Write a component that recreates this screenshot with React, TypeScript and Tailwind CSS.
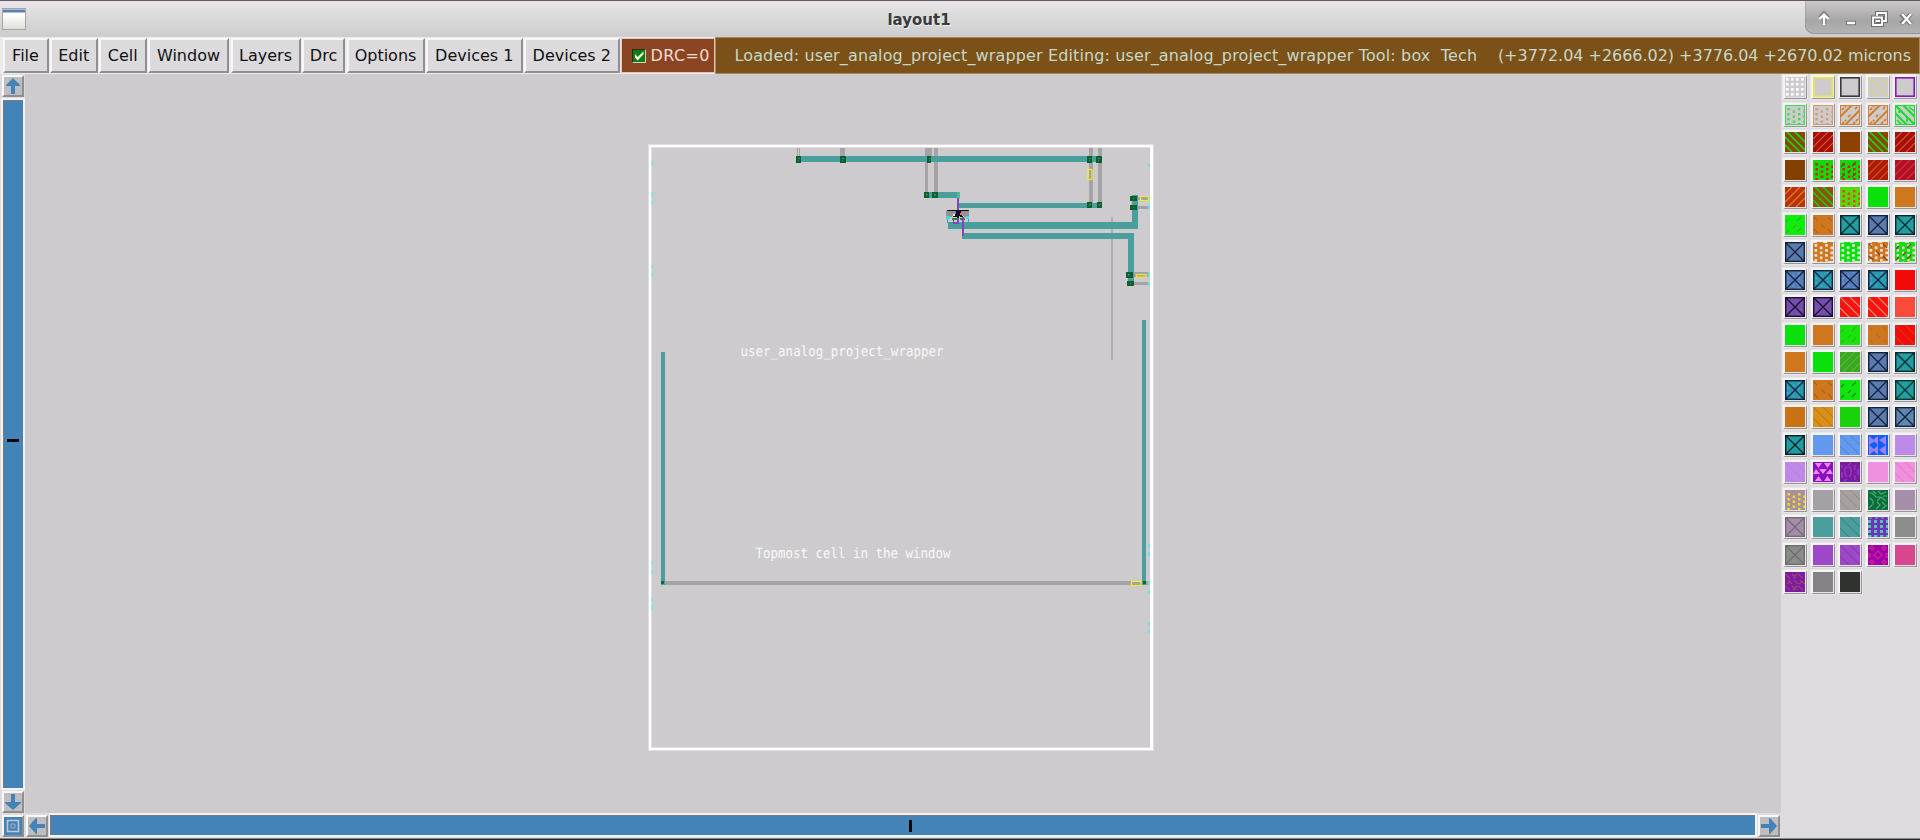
import React from 'react';

type Swatch = [base: string, pattern?: string, ink?: string, extra?: string];

const ORANGE = '#cf771f';
const GREEN = '#0ae00a';
const BLUE = '#5d7aae';
const TEAL = '#209ea2';
const BARE = '#cdcbce';
const NAVY = '#10233d';

const swatches: Swatch[] = [
  [BARE, 'grid', '#ffffff'], [BARE, 'frame', '#ece840'], [BARE, 'frame', '#3a3a3a'], [BARE, 'back', '#dcd86c'], [BARE, 'frame', '#8718b4'],
  [BARE, 'dotframe', '#3ddc4a'], [BARE, 'dotframe', '#d89a66'], [BARE, 'slashframe', '#d08030'], [BARE, 'slashframe', '#d08030'], [BARE, 'backframe', '#14e028'],
  ['#8c4508', 'bback', '#14d80c'], ['#a80c0c', 'slash', '#c8641a'], ['#8b4200'], ['#8c4508', 'bback', '#14d80c'], ['#a80c0c', 'slash', '#c8641a'],
  ['#834000'], ['#0cdc0c', 'stagger', '#f01010'], ['#0cdc0c', 'stagger', '#f01010', 'dash'], ['#ad1a0a', 'slash', '#cc5a1a'], ['#b50c28', 'slash', '#c83c34'],
  ['#bb300c', 'slash', '#e08c10'], ['#94500c', 'bback', '#1cc80c'], ['#50dc0c', 'stagger', '#f04018'], [GREEN], [ORANGE],
  ['#0cee0c', 'dash', '#40a828'], [ORANGE, 'bdash', '#b0642c'], [TEAL, 'x', '#08282a'], [BLUE, 'x', NAVY], [TEAL, 'x', '#08282a'],
  [BLUE, 'x', NAVY], [ORANGE, 'brick', '#eee0d4'], [GREEN, 'brick', '#dcf2dc'], [ORANGE, 'brick', '#eee0d4', 'bdash'], [GREEN, 'brick', '#eec8c8', 'dash'],
  [BLUE, 'dotx', NAVY], [TEAL, 'dotx', NAVY], [BLUE, 'dotx', NAVY], [TEAL, 'dotx', NAVY], ['#f20a0a'],
  ['#7350a8', 'x', '#200c38'], ['#7350a8', 'x', '#200c38'], ['#fc140c', 'back', '#c89898'], ['#fc140c', 'back', '#c89898'], ['#fa4a3a'],
  [GREEN], [ORANGE], ['#18e40c', 'dash', '#34b41c'], [ORANGE, 'bdash', '#b0702c'], ['#f40c0c', 'back', '#c84010'],
  [ORANGE], [GREEN], ['#3ba824', 'slash', '#54b830'], [BLUE, 'x', NAVY], [TEAL, 'x', '#08282a'],
  [TEAL, 'dotx', NAVY], [ORANGE, 'bdash', '#ac5c20'], ['#0ce80c', 'dash', '#307410'], [BLUE, 'x', NAVY], [TEAL, 'x', '#08382a'],
  ['#c87214'], ['#d8901a', 'back', '#c07818'], ['#18d20c'], [BLUE, 'x', NAVY], ['#5f87ae', 'x', NAVY],
  ['#209ca4', 'x', '#082020'], ['#6299ee'], ['#6299ee', 'back', '#5a88d0'], ['#0a60f8', 'bows', '#a080ee'], ['#bd8aea'],
  ['#bd8aea', 'back', '#c87cdc'], ['#8a10c4', 'tris', '#f084f0'], ['#742098', 'rings', '#a828d8'], ['#f090e0'], ['#f090e0', 'back', '#f07cb8'],
  ['#a8909c', 'stagger', '#f0dc20'], ['#a3a1a3'], ['#a3a1a3', 'back', '#ac8c78'], ['#106a34', 'maze', '#38b088'], ['#a58ea8'],
  ['#a58ea8', 'x', '#776878'], ['#4a9f9e'], ['#4a9f9e', 'back', '#408880'], ['#7030c0', 'dots', '#50c8a0'], ['#8b8d8b'],
  ['#8b8d8b', 'x', '#6c6e6c'], ['#9c48c8'], ['#9c48c8', 'back', '#8c3cb0'], ['#9a00b0', 'gems', '#d82080'], ['#d8468e'],
  ['#8218a4', 'weave', '#8c5068'], ['#858387'], ['#30322f'],
];

const lines: Record<string, string> = {
  back: 'M0 0L20 20M10 0L20 10M0 11L9 20',
  bback: 'M-1 4L15 20M1 -1L21 19M9 -1L21 11M-1 12L7 20',
  slash: 'M0 7L7 0M0 15L15 0M3 20L20 3M11 20L20 11',
  dash: 'M1 7L4 4M12 6L16 2M8 13L11 10M1 18L4 15M12 17L16 13',
  bdash: 'M1 2L4 5M15 2L19 6M8 9L12 13M1 14L5 18M15 14L19 18',
};

function cells(step: number, stagger: number, x0: number, y0: number, size: number, ink: string) {
  const out: React.ReactNode[] = [];
  for (let c = 0; x0 + c * step < 20; c++) {
    for (let y = y0 + (c % 2 ? stagger : 0); y < 20; y += 5) {
      out.push(<rect key={`${c}-${y}`} x={x0 + c * step} y={y} width={size} height={size} fill={ink} />);
    }
  }
  return out;
}

function Texture({ kind, ink }: { kind?: string; ink?: string }) {
  const color = ink ?? '#000';
  const stroke = { fill: 'none', stroke: color };
  switch (kind) {
    case 'frame': return <rect x=".8" y=".8" width="18.400" height="18.400" strokeWidth="1.600" {...stroke} />;
    case 'grid': return <g>{cells(5, 0, 1, 1, 2.6, color)}</g>;
    case 'dots': return <g>{cells(6, 0, 0, 3, 3, color)}<path d="M1 1H20M1 19H20" strokeDasharray="3 3" {...stroke} /></g>;
    case 'stagger': return <g>{cells(5.3, 2.5, 2.4, 3, 2.5, color)}</g>;
    case 'dotframe': return <g>{cells(5.3, 2.5, 2.4, 3, 2.3, color)}<rect x=".5" y=".5" width="19" height="19" {...stroke} /></g>;
    case 'slashframe': return <g><rect x=".5" y=".5" width="19" height="19" {...stroke} /><path d="M0 12L12 0M5 20L20 5" strokeWidth="2" {...stroke} /><path d="M2 5L6 1M2 19L6 15M8 12L11 9M13 19L19 13M15 4L18 1" strokeWidth="1.800" strokeDasharray="3 1" {...stroke} /></g>;
    case 'backframe': return <g><rect x=".5" y=".5" width="19" height="19" {...stroke} /><path d="M0 0L20 20M8 0L20 12M0 8L12 20" strokeWidth="2.2" {...stroke} /><path d="M14 2L19 6M2 15L6 19M3 7H7M12 12V17" strokeWidth="1.5" {...stroke} /></g>;
    case 'x': return <g><rect x=".7" y=".7" width="18.6" height="18.6" strokeWidth="1.4" {...stroke} /><path d="M1 1L19 19M19 1L1 19" strokeWidth="1.3" {...stroke} /></g>;
    case 'dotx': return <g>{cells(5.3, 2.5, 2, 2, 2.5, '#5590e8')}<rect x=".7" y=".7" width="18.6" height="18.6" strokeWidth="1.4" {...stroke} /><path d="M1 1L19 19M19 1L1 19" strokeWidth="1.3" {...stroke} /></g>;
    case 'brick': return <g>{cells(5.3, 2.5, 1.5, 2, 2.7, color)}<path d="M0 .5H4M10 .5H14M0 19.5H4M15 19.5H20" {...stroke} /></g>;
    case 'bows': return <path d="M1 1L7 6L1 10ZM1 10L7 15L1 20ZM10 1V20L5 15L10 10L5 5ZM11 5L18 1V10ZM11 15L18 10V20Z" fill={color} />;
    case 'tris': return <path d="M2 1H9L5.500 6ZM11 1H18L14.500 6ZM0 12L3 7L7 12ZM6 7H14L10 12ZM13 12L17 7L20 12ZM2 19L5.500 14L9 19ZM11 19L14.500 14L18 19Z" fill={color} />;
    case 'rings': return <path d="M2 3V6M2 10V16M7 4L5 7V12L7 15M9 4L11 7V12L9 15M15 3V8M18 7V13M15 13V18M4 19L7 17M11 1L8 3" strokeWidth="1.5" {...stroke} />;
    case 'maze': return <path d="M1 3H4L8 7H12M10 1L13 4L18 2M2 8L5 11V15M9 11L13 7L18 11M8 19L12 15L9 12M14 19L19 15M1 18L4 15M15 6H19M14 12L17 15M5 1L8 4" strokeWidth="1.2" {...stroke} />;
    case 'gems': return <path d="M10 6L14 10L10 14L6 10ZM2 3L4 1L6 3L4 5ZM14 3L16 1L18 3L16 5ZM2 17L4 15L6 17L4 19ZM14 17L16 15L18 17L16 19ZM0 9H2V12H0ZM18 9H20V12H18Z" strokeWidth="1.3" {...stroke} />;
    case 'weave': return <path d="M0 2L5 6M7 2L11 6M13 2L18 6M3 8L7 12M9 8L13 12M15 8L20 12M0 14L5 18M7 14L11 18M13 14L18 18M2 12L5 9M8 18L12 14M14 12L17 9M8 6L12 2" strokeWidth="1.2" {...stroke} />;
    default: return kind && lines[kind] ? <path d={lines[kind]} strokeWidth={kind === 'bback' ? 1.7 : 1.1} {...stroke} /> : null;
  }
}

const raised = 'border-2 border-t-[#f8f7f8] border-l-[#f8f7f8] border-r-[#908e91] border-b-[#908e91]';

function Arrow({ d }: { d: string }) {
  return (
    <div className={`h-[22px] w-[22px] shrink-0 bg-[#bfbdc0] ${raised}`}>
      <svg viewBox="0 0 18 18" className="block h-[18px] w-[18px]"><path d={d} fill="#4383b8" /></svg>
    </div>
  );
}

const menus: [string, string][] = [
  ['File', 'w-[46px]'], ['Edit', 'w-[47.5px]'], ['Cell', 'w-[47.5px]'], ['Window', 'w-[81px]'], ['Layers', 'w-[70px]'],
  ['Drc', 'w-[43px]'], ['Options', 'w-[78px]'], ['Devices 1', 'w-[96.5px]'], ['Devices 2', 'w-[95.5px]'],
];

function TitleBar() {
  return (
    <header className="flex h-[37px] shrink-0 border-t border-[#5e5c5a] bg-linear-to-b from-[#ebe5ea] via-[#dbdbdb] via-40% to-[#cdcdcd]">
      <svg width="28" height="36" className="shrink-0">
        <defs><linearGradient id="page" x2="0" y2="1"><stop offset=".3" stopColor="#fff" /><stop offset="1" stopColor="#dddfd6" /></linearGradient></defs>
        <rect x="2.500" y="7.500" width="23" height="21" fill="url(#page)" stroke="#a4a4a0" />
        <rect x="3" y="8.500" width="22" height="3" fill="#5a80b4" />
      </svg>
      <h1 className="flex-1 pl-[5px] pt-[8px] text-center text-[15px] leading-[22px] font-bold text-[#3b3b3b] [text-shadow:1px_1px_0_#f0f0f0]">layout1</h1>
      <svg width="115" height="36" className="shrink-0">
        <defs><linearGradient id="ctl" x2="0" y2="1"><stop stopColor="#cbc7ca" /><stop offset=".6" stopColor="#a6a6a6" /><stop offset="1" stopColor="#b4b4b4" /></linearGradient></defs>
        <path d="M0 0H115V33H10Q0 33 0 22Z" fill="url(#ctl)" />
        <path d="M0 0V22Q0 32.500 10 32.500H115" fill="none" stroke="#969696" />
        <g stroke="#747474" strokeWidth="4.500" fill="none"><path d="M19 23V15M15 17L19 13L23 17" /><path d="M41 22H51M96 13L106 23M106 13L96 23" /></g>
        <g stroke="#fff" strokeWidth="2.400" fill="none"><path d="M19 24V14M14.500 18L19 13.500L23.500 18" /><path d="M42 22H50M97 13L106 23M106 13L97 23" /></g>
        <g fill="none"><path d="M72 16V12H81V20H77M68 16.500H77V24H68ZM71 20H75" stroke="#707070" strokeWidth="4" /><path d="M72 15V12H81V20H78M68 16.500H77V24H68ZM71 20H75" stroke="#fff" strokeWidth="1.800" /></g>
      </svg>
    </header>
  );
}

function MenuBar() {
  return (
    <nav className="flex h-[37px] shrink-0 bg-[#eceaec] pl-[2.5px] text-base whitespace-nowrap">
      <div className="flex gap-[1.5px] pt-[1px] pb-[1px]">
        {menus.map(([label, width]) => (
          <button key={label} className={`${width} ${raised} bg-[#dcdadd] text-center leading-[30px] text-[#111]`}>{label}</button>
        ))}
      </div>
      <div className="flex min-w-0 flex-1 pl-[1px]">
        <div className="my-[1px] flex w-[94px] shrink-0 items-center border border-[#e0c8bc] bg-[#8b4422] pl-[10px] text-[#f4ddd2]">
          <svg width="14" height="14" className="mr-[5px] shrink-0"><rect width="14" height="14" fill="#d8d0c8" /><path d="M0 0H14L12.500 1.500H1.500V12.500L0 14Z" fill="#402010" /><rect x="1" y="1" width="12" height="12" fill="#0a820a" /><path d="M3 5V8.500L5.700 11.500L11.500 5V2.500L5.700 8Z" fill="#fff" /></svg>
          <span className="leading-[30px] tracking-[0.4px]">DRC=0</span>
        </div>
        <div className="flex min-w-0 flex-1 items-center border border-[#a38866] bg-[#7c5117] pl-[19px] pr-[8px] text-[#c4d8cb]">
          <span className="w-[742px] overflow-hidden whitespace-pre leading-[30px] tracking-[0.13px]">Loaded: user_analog_project_wrapper Editing: user_analog_project_wrapper Tool: box  Tech</span>
          <span className="ml-auto leading-[30px] tracking-[-0.03px]">(+3772.04 +2666.02) +3776.04 +2670.02 microns</span>
        </div>
      </div>
    </nav>
  );
}

const vias: [number, number, number, number][] = [
  [796, 156, 5, 7], [840, 156, 6, 7], [927, 156, 4, 7], [1087, 156, 5, 7], [1096, 156, 6, 7],
  [924, 192, 5, 6], [932, 192, 6, 6], [1087, 202, 5, 6], [1097, 202, 5, 6],
  [1130, 196, 7, 5], [1130, 205, 7, 5], [1126, 272, 7, 6], [1127, 281, 7, 5],
];

const pins: [number, number, number][] = [
  [651, 161, 5], [651, 192, 5], [651, 201, 4], [651, 265, 4], [651, 273, 4], [651, 561, 4], [651, 570, 4], [651, 598, 4], [651, 605, 5],
  [1148, 164, 3], [1148, 196, 5], [1148, 205, 4], [1148, 272, 5], [1148, 282, 4], [1148, 544, 4], [1148, 552, 4], [1148, 581, 4], [1148, 590, 4], [1148, 622, 4], [1148, 629, 4],
];

function LayoutView() {
  return (
    <svg viewBox="25 74 1756 739" className="block h-[739px] w-[1756px] bg-[#cdcbce]" shapeRendering="crispEdges">
      <g fill="#a5a3a6">
        <path d="M797 148h1v9h-1zM799 148h1v9h-1zM840 148h5v9h-5zM925 148h7v8h-4v37h-3zM934 148h4v45h-4zM1089 148h4v56h-4zM1098 148h4v56h-4z" />
        <path d="M1137 197h12v3h-12zM1137 206h12v3h-12zM1133 272h16v5h-16zM1133 282h16v3h-16zM661 581h489v4h-489z" />
        <path d="M1111 217h2v143h-2z" opacity=".7" />
      </g>
      <g fill="#4a9f9e">
        <path d="M798 156h304v6h-304zM925 192h35v6h-35zM957 203h144v5h-144z" />
        <path d="M947 217h1v5h20v-5h1v5h163v-27h6v34h-190zM962 233h172v53h-6v-47h-166z" />
        <path d="M661 352h4v233h-4zM1142 320h4v265h-4z" />
      </g>
      <path d="M661 581h3v3h-3zM1143 581h3v3h-3z" fill="#106a34" />
      <path d="M957 192h3v6h-3z" fill="#48c090" />
      {vias.map(([x, y, w, h]) => (
        <g key={`${x}-${y}`}><rect x={x} y={y} width={w} height={h} fill="#0c6030" /><path d={`M${x + 2} ${y + 2}h2v1h-2zM${x + 2} ${y + h - 2}h1v-1h-1z`} fill="#3a9064" /></g>
      ))}
      {pins.map(([x, y, h]) => <rect key={`${x}-${y}`} x={x} y={y} width="2" height={h} fill="#6ce0e2" />)}
      <g fill="none" stroke="#f2f01c" strokeWidth="1.200" shapeRendering="auto">
        <path d="M1088 169.500H1092V179.500H1088ZM1140.500 196.500H1148.500V200.500H1140.500ZM1136.500 274.500H1146V277H1136.500ZM1131.500 581.500H1141V585.500H1131.500Z" />
      </g>
      <g>
        <path d="M946 211h23v6h-5l-3-3h-7l-3 3h-5z" fill="#939193" />
        <path d="M947 210h22v1h-22zM956 211h5v2l2 4h-3l-2-2l-2 2h-3l3-4z" fill="#08060a" />
        <path d="M946 216h4v3h-4zM966 216h3v3h-3z" fill="#38e0e8" />
        <path d="M952 218h5v2h-5zM960 218h5v2h-5z" fill="#10902c" />
        <path d="M953 214h2v2h-2z" fill="#f4f0f4" /><path d="M960 213h2v2h-2z" fill="#dc7c68" />
        <path d="M957 198h2v26h-6v-4h1v2h3zM962 217h2v19h-2z" fill="#8644bc" />
        <path d="M957 210h2v8h-2z" fill="#180830" />
      </g>
      <g fill="#fff">
        <path d="M648 144h506v607h-506zM652 148v599h498V148z" fillRule="evenodd" opacity=".35" />
        <path d="M649 145h504v605h-504zM651 147v601h499V147z" fillRule="evenodd" />
      </g>
      <g fill="#f8f8f8" fontFamily="DejaVu Sans Mono, monospace" fontSize="14.200" textRendering="geometricPrecision">
        <text x="740.500" y="356" textLength="203" lengthAdjust="spacingAndGlyphs">user_analog_project_wrapper</text>
        <text x="755.500" y="557.500" textLength="195" lengthAdjust="spacingAndGlyphs">Topmost cell in the window</text>
      </g>
    </svg>
  );
}

function Palette() {
  return (
    <aside className="w-[139px] shrink-0 bg-[#dddbde] pt-[1px] pl-[2px]">
      <div className="grid grid-cols-[repeat(5,24px)] auto-rows-[24px] gap-[3.5px]">
        {swatches.map(([base, kind, ink, extra], i) => (
          <div key={i} className="border-t-2 border-l-2 border-r border-b border-t-[#f5f4f5] border-l-[#f5f4f5] border-r-[#959396] border-b-[#959396] bg-[#e6e4e6] shadow-[0_0_0_1px_#e8e6e8]">
            <svg viewBox="0 0 20 20" className="block h-[20px] w-[20px]">
              <rect width="20" height="20" fill={base} />
              <Texture kind={kind} ink={ink} />
              {extra && <Texture kind={extra} ink="#804020" />}
            </svg>
          </div>
        ))}
      </div>
    </aside>
  );
}

export default function App() {
  return (
    <div className="flex h-[840px] w-[1920px] flex-col overflow-hidden bg-[#dddbde] font-['DejaVu_Sans',sans-serif]">
      <TitleBar />
      <MenuBar />
      <main className="flex h-[764px] shrink-0">
        <div className="flex w-[1781px] flex-col">
          <div className="flex h-[739px]">
            <div className="flex w-[25px] shrink-0 flex-col items-center gap-[1px] pt-[1px]">
              <Arrow d="M9 1L16 8V9H11V17H7V9H2V8Z" />
              <div className="flex min-h-0 w-[24px] flex-1 border-2 border-[#f4f3f4] bg-[#4383b8]">
                <div className="flex flex-1 items-center justify-center border-t border-l border-[#7b7877]"><div className="mb-[9px] h-[3px] w-[12px] bg-[#08080c]" /></div>
              </div>
              <Arrow d="M7 1H11V9H17V10L9 17L1 10V9H7Z" />
            </div>
            <LayoutView />
          </div>
          <div className="flex h-[25px] gap-[1px] pl-[2px] pr-[1px]">
            <div className={`mt-[2px] h-[22px] w-[22px] shrink-0 ${raised}`}>
              <svg viewBox="0 0 18 18" className="block h-[18px] w-[18px]"><rect width="18" height="18" fill="#4383b8" /><path d="M3.500 3.500H14.500V14.500H3.500Z" fill="none" stroke="#c6c5c8" strokeWidth="1.600" /><path d="M7 7H11V11H7Z" fill="none" stroke="#98b0c4" /></svg>
            </div>
            <div className="mt-[2px] pl-[1px]"><Arrow d="M1 9L8 1H9V7H17V11H9V17H8Z" /></div>
            <div className="flex h-[24px] min-w-0 flex-1 border-2 border-l border-[#f4f3f4] bg-[#4383b8]">
              <div className="flex flex-1 items-center justify-center border-t border-l border-[#7b7877]"><div className="mr-[-14px] h-[12px] w-[3px] bg-[#08080c]" /></div>
            </div>
            <div className="mt-[2px]"><Arrow d="M17 9L10 1H9V7H1V11H9V17H10Z" /></div>
          </div>
        </div>
        <Palette />
      </main>
      <div className="h-[2px] shrink-0 border-t border-[#8a888a] bg-[#25282a]" />
    </div>
  );
}
